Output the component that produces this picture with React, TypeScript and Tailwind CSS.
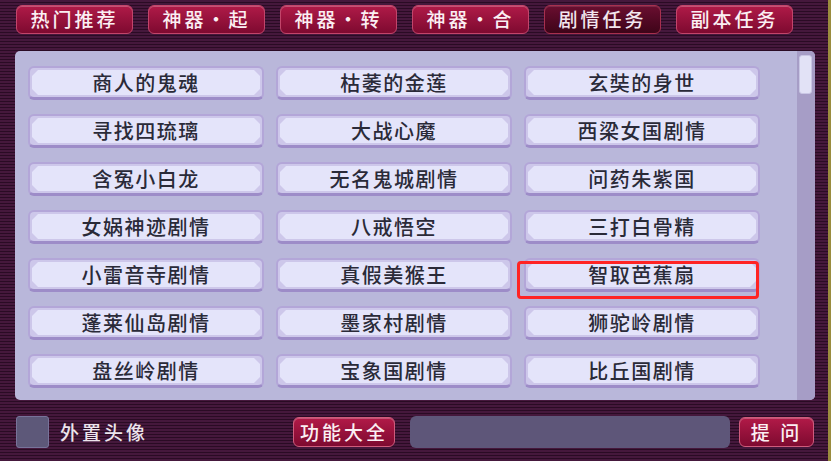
import React from "react";

const tabs = ["热门推荐", "神器・起", "神器・转", "神器・合", "剧情任务", "副本任务"];

const quests: string[][] = [
  ["商人的鬼魂", "枯萎的金莲", "玄奘的身世"],
  ["寻找四琉璃", "大战心魔", "西梁女国剧情"],
  ["含冤小白龙", "无名鬼城剧情", "问药朱紫国"],
  ["女娲神迹剧情", "八戒悟空", "三打白骨精"],
  ["小雷音寺剧情", "真假美猴王", "智取芭蕉扇"],
  ["蓬莱仙岛剧情", "墨家村剧情", "狮驼岭剧情"],
  ["盘丝岭剧情", "宝象国剧情", "比丘国剧情"],
];

const Tab = ({ label, active }: { label: string; active?: boolean }) => (
  <div
    className={
      active
        ? "w-[117px] h-[29px] rounded-[6px] border border-[#a8304e] bg-gradient-to-b from-[#6a0e30] to-[#3e0519] flex items-center justify-center text-[19px] font-medium tracking-[3px] text-[#f2e6ee] shadow-[inset_0_1px_0_rgba(255,255,255,0.12)]"
        : "w-[117px] h-[29px] rounded-[6px] border border-[#c2456a] bg-gradient-to-b from-[#b01a48] to-[#7e0a30] flex items-center justify-center text-[19px] font-medium tracking-[3px] text-[#fbeff3] shadow-[inset_0_1px_0_rgba(255,255,255,0.25)]"
    }
  >
    {label}
  </div>
);

const QuestButton = ({ label, selected }: { label: string; selected?: boolean }) => (
  <div className="relative h-[34px]">
    <div className="h-full rounded-[6px] border-2 border-[#b3a6d8] border-b-[3px] border-b-[#9d8cc8] bg-[#cdc7ea] p-[2px]">
      <div className="h-full bg-[#e4e4fa] [clip-path:polygon(6px_0,calc(100%_-_6px)_0,100%_6px,100%_calc(100%_-_6px),calc(100%_-_6px)_100%,6px_100%,0_calc(100%_-_6px),0_6px)] flex items-center justify-center text-[20px] font-medium tracking-[1.5px] text-[#2a2a38]">
        {label}
      </div>
    </div>
    {selected && (
      <div className="absolute left-[-7px] top-[3px] w-[242px] h-[38px] rounded-[4px] border-[3px] border-[#ff2424]" />
    )}
  </div>
);

const RedButton = ({ label, width }: { label: string; width: string }) => (
  <div
    className={`${width} h-[30px] rounded-[6px] border border-[#cf5c7c] bg-gradient-to-b from-[#b21a48] to-[#7e0a30] flex items-center justify-center text-[19px] font-medium tracking-[3px] text-[#fbeff3] shadow-[inset_0_1px_0_rgba(255,255,255,0.25)]`}
  >
    {label}
  </div>
);

export default function App() {
  return (
    <div className="w-[831px] h-[461px] overflow-hidden flex flex-col border-r-[3px] border-[#9a8c3e] bg-[repeating-linear-gradient(to_bottom,#45183c_0px,#45183c_2px,#2a0b24_2px,#2a0b24_3px)] font-['Noto_Sans_CJK_SC','Noto_Sans',sans-serif]">
      <div className="flex gap-[15px] pl-[16px] pt-[5px]">
        {tabs.map((t) => (
          <Tab key={t} label={t} active={t === "剧情任务"} />
        ))}
      </div>

      <div className="ml-[15px] mt-[17px] w-[800px] h-[349px] rounded-[5px] bg-[#b9b7da] flex overflow-hidden">
        <div className="flex-1 pl-[13px] pt-[15px] grid grid-cols-[236px_236px_236px] gap-x-[12px] gap-y-[14px] content-start">
          {quests.map((row, r) =>
            row.map((q, c) => (
              <QuestButton key={q} label={q} selected={r === 4 && c === 2} />
            ))
          )}
        </div>
        <div className="w-[18px] h-full bg-[#a69dc6] pt-[4px] pl-[2px]">
          <div className="w-[13px] h-[39px] rounded-[3px] border border-[#c9c6e4] bg-[#e2e2f6]" />
        </div>
      </div>

      <div className="flex items-center pl-[16px] mt-[16px]">
        <div className="w-[33px] h-[32px] rounded-[3px] border border-[#77739a] bg-[#5d5879]" />
        <span className="ml-[11px] w-[233px] text-[19px] font-medium tracking-[3px] text-[#ece4ec]">
          外置头像
        </span>
        <RedButton label="功能大全" width="w-[102px]" />
        <div className="ml-[15px] w-[320px] h-[32px] rounded-[6px] bg-[#5e5679]" />
        <div className="ml-[9px]">
          <RedButton label="提 问" width="w-[75px]" />
        </div>
      </div>
    </div>
  );
}
